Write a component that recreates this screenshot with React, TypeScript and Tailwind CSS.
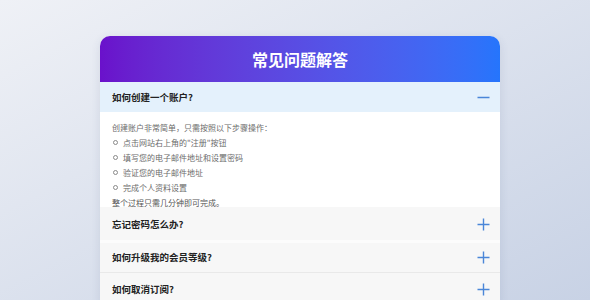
import React from "react";

const font = { fontFamily: '"Noto Sans CJK SC", "Noto Sans", sans-serif' };

function Plus() {
  return (
    <svg width="13" height="13" viewBox="0 0 13 13" fill="none">
      <path d="M6.5 0.5V12.5M0.5 6.5H12.5" stroke="#4a86d8" strokeWidth="1.4" />
    </svg>
  );
}

function Minus() {
  return (
    <svg width="13" height="13" viewBox="0 0 13 13" fill="none">
      <path d="M0.5 6.5H12.5" stroke="#4a86d8" strokeWidth="1.4" />
    </svg>
  );
}

function Bullet({ children }: { children: React.ReactNode }) {
  return (
    <li className="flex items-center">
      <span className="mr-[5px] ml-[1px] h-[5px] w-[5px] rounded-full border border-[#8a8a8a]" />
      <span>{children}</span>
    </li>
  );
}

export default function App() {
  return (
    <div
      className="h-[300px] w-[590px] overflow-hidden bg-gradient-to-br from-[#eff1f6] to-[#c8d2e5]"
      style={font}
    >
      <div className="ml-[100px] pt-[36px]">
        <div className="w-[400px] overflow-hidden rounded-t-[10px] bg-white shadow-[0_2px_10px_rgba(60,70,120,0.12)]">
          <div className="flex h-[46px] items-center justify-center bg-gradient-to-r from-[#6a11cb] to-[#2575fc] text-[16px] font-bold text-white">
            常见问题解答
          </div>

          <div className="flex h-[30px] items-center justify-between bg-[#e4f1fc] pl-[12px] pr-[10px]">
            <span className="text-[9.5px] font-bold text-[#222]">如何创建一个账户?</span>
            <Minus />
          </div>
          <div className="h-[95px] overflow-hidden bg-white pl-[12px] pt-[8px] text-[8px] leading-[15px] text-[#6b6b6b]">
            <p>创建账户非常简单，只需按照以下步骤操作：</p>
            <ul>
              <Bullet>点击网站右上角的"注册"按钮</Bullet>
              <Bullet>填写您的电子邮件地址和设置密码</Bullet>
              <Bullet>验证您的电子邮件地址</Bullet>
              <Bullet>完成个人资料设置</Bullet>
            </ul>
            <p className="text-[#555]">整个过程只需几分钟即可完成。</p>
          </div>

          <div className="flex h-[36px] items-center justify-between border-b-[3px] border-[#fcfcfc] bg-[#f7f7f7] pl-[12px] pr-[10px] pt-[2px]">
            <span className="text-[9.5px] font-bold text-[#222]">忘记密码怎么办?</span>
            <Plus />
          </div>
          <div className="flex h-[30px] items-center justify-between border-b border-[#e9e9e9] bg-[#f7f7f7] pl-[12px] pr-[10px]">
            <span className="text-[9.5px] font-bold text-[#222]">如何升级我的会员等级?</span>
            <Plus />
          </div>
          <div className="flex h-[32px] items-center justify-between bg-[#f7f7f7] pl-[12px] pr-[10px]">
            <span className="text-[9.5px] font-bold text-[#222]">如何取消订阅?</span>
            <Plus />
          </div>
        </div>
      </div>
    </div>
  );
}
